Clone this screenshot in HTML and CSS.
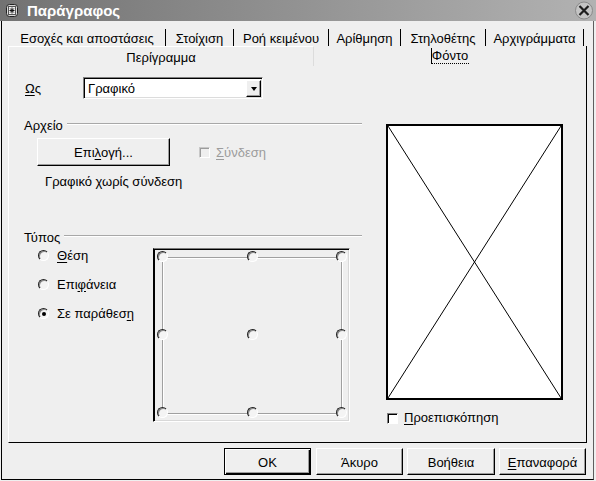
FILE: index.html
```html
<!DOCTYPE html>
<html lang="el">
<head>
<meta charset="utf-8">
<title>Παράγραφος</title>
<link rel="stylesheet" href="styles.css">
</head>
<body>
<div class="window">
  <div class="titlebar">
    <span class="app-icon">
      <svg width="12" height="13" viewBox="0 0 12 13">
        <rect x="0.5" y="0.5" width="11" height="12" rx="3" fill="#d8d8d8" stroke="#222"/>
        <rect x="2.5" y="2.5" width="7" height="8" fill="#f2f2f2" stroke="#555"/>
        <path d="M6 3.5v6M3.5 6.5h5M4.2 4.5l3.6 4M7.8 4.5l-3.6 4" stroke="#111" stroke-width="1"/>
      </svg>
    </span>
    <span class="title">Παράγραφος</span>
    <span class="close">
      <svg width="20" height="19" viewBox="0 0 20 19">
        <circle cx="10" cy="9.5" r="8.5" fill="#c4c4c4" stroke="#8a8a8a"/>
        <path d="M5.5 5l9 9M14.5 5l-9 9" stroke="#1e1e1e" stroke-width="2.2"/>
      </svg>
    </span>
  </div>
  <div class="frame">
    <div class="tabs-row1">
      <div class="tab t1">Εσοχές και αποστάσεις</div>
      <div class="tab t2">Στοίχιση</div>
      <div class="tab t3">Ροή κειμένου</div>
      <div class="tab t4">Αρίθμηση</div>
      <div class="tab t5">Στηλοθέτης</div>
      <div class="tab t6">Αρχιγράμματα</div>
    </div>
    <div class="tabpage">
      <div class="tabs-row2">
        <div class="tab2 inactive">Περίγραμμα</div>
        <div class="tab2 active"><span class="focus">Φόντο</span></div>
      </div>
      <div class="panel">
        <div class="leftcol">
          <div class="as-row">
            <span class="as-label"><u>Ω</u>ς</span>
            <div class="combo">
              <span class="combo-text">Γραφικό</span>
              <span class="combo-btn"><span class="arrow"></span></span>
            </div>
          </div>
          <div class="group-head head-file"><span>Αρχείο</span><span class="rule"></span></div>
          <div class="file-row">
            <div class="btn btn-select">Επι<u>λ</u>ογή...</div>
            <label class="check disabled"><span class="box"></span><span><u>Σ</u>ύνδεση</span></label>
          </div>
          <div class="nolink">Γραφικό χωρίς σύνδεση</div>
          <div class="group-head head-type"><span>Τύπος</span><span class="rule"></span></div>
          <div class="type-row">
            <div class="radios">
              <div class="radio-row"><span class="radio"></span><span><u>Θ</u>έση</span></div>
              <div class="radio-row"><span class="radio"></span><span>Επι<u>φ</u>άνεια</span></div>
              <div class="radio-row"><span class="radio on"></span><span>Σε παράθεσ<u>η</u></span></div>
            </div>
            <div class="posbox">
              <div class="posgrid">
                <span class="radio"></span><span class="radio"></span><span class="radio"></span>
                <span class="radio"></span><span class="radio"></span><span class="radio"></span>
                <span class="radio"></span><span class="radio"></span><span class="radio"></span>
              </div>
            </div>
          </div>
        </div>
        <div class="rightcol">
          <div class="preview">
            <svg width="173" height="272" viewBox="0 0 173 272" preserveAspectRatio="none">
              <line x1="0" y1="0" x2="173" y2="272" stroke="#000" stroke-width="1"/>
              <line x1="173" y1="0" x2="0" y2="272" stroke="#000" stroke-width="1"/>
            </svg>
          </div>
          <label class="check preview-check"><span class="box white"></span><span><u>Π</u>ροεπισκόπηση</span></label>
        </div>
      </div>
    </div>
    <div class="buttons">
      <div class="btn btn-dlg default">OK</div>
      <div class="btn btn-dlg">Άκυρο</div>
      <div class="btn btn-dlg wide">Βοήθεια</div>
      <div class="btn btn-dlg"><u>Ε</u>παναφορά</div>
    </div>
  </div>
</div>
</body>
</html>
```
FILE: styles.css
```css
html, body {
  margin: 0;
  padding: 0;
}
body {
  width: 596px;
  height: 481px;
  overflow: hidden;
  background: #efefef;
  font-family: "Liberation Sans", Arial, sans-serif;
  font-size: 13px;
  color: #000;
}
u {
  text-decoration: underline;
  text-underline-offset: 2px;
}
.window {
  width: 596px;
  height: 481px;
  display: flex;
  flex-direction: column;
}
.titlebar {
  height: 21px;
  flex: none;
  display: flex;
  align-items: center;
  padding: 0 2px 0 6px;
  background: linear-gradient(to right, #727272, #8c8c8c 40%, #b2b2b2);
  color: #fff;
  box-sizing: border-box;
}
.app-icon {
  width: 12px;
  height: 13px;
  display: flex;
}
.title {
  margin-left: 9px;
  font-weight: bold;
  font-size: 15px;
  flex: 1;
}
.close {
  display: flex;
  margin-top: -1px;
}
.frame {
  flex: 1;
  display: flex;
  flex-direction: column;
  margin: 0 2px 1px 1px;
  border-left: 1px solid #000;
  border-right: 1px solid #5e5e5e;
  border-bottom: 1px solid #000;
}
.tabs-row1 {
  height: 25px;
  flex: none;
  display: flex;
  align-items: flex-end;
  padding-left: 7px;
}
.tab {
  height: 17px;
  box-sizing: border-box;
  border-right: 1px solid #000;
  text-align: center;
  line-height: 17px;
  padding-top: 1px;
  white-space: nowrap;
}
.t1 { width: 157px; }
.t2 { width: 68px; }
.t3 { width: 95px; }
.t4 { width: 72px; }
.t5 { width: 85px; }
.t6 { width: 98px; }
.tabpage {
  height: 397px;
  flex: none;
  margin: 0 6px;
  box-sizing: border-box;
  border-left: 1px solid #fff;
  border-right: 1px solid #000;
  border-bottom: 1px solid #000;
  display: flex;
  flex-direction: column;
}
.tabs-row2 {
  height: 20px;
  display: flex;
}
.tab2 {
  box-sizing: border-box;
  text-align: center;
  white-space: nowrap;
}
.tab2.inactive {
  width: 305px;
  border-top: 1px solid #fff;
  border-right: 1px solid #dcdcdc;
  line-height: 19px;
  padding-top: 1px;
}
.tab2.active {
  flex: 1;
  padding-top: 2px;
  line-height: 16px;
}
.focus {
  display: inline-block;
  border-left: 1px solid #000;
  border-bottom: 1px dotted #000;
  line-height: 15px;
  padding: 0 1px 0 0;
}
.panel {
  flex: 1;
  display: flex;
  padding: 11px 0 0 15px;
  gap: 24px;
}
.leftcol {
  width: 338px;
  display: flex;
  flex-direction: column;
}
.as-row {
  height: 22px;
  display: flex;
  align-items: center;
}
.as-label {
  width: 59px;
  padding-left: 1px;
  box-sizing: border-box;
}
.combo {
  width: 180px;
  height: 22px;
  box-sizing: border-box;
  background: #fff;
  border: 1px solid;
  border-color: #808080 #fff #fff #808080;
  box-shadow: inset 1px 1px 0 #000, inset -1px -1px 0 #dcdcdc;
  display: flex;
  align-items: center;
  padding: 1px 1px 1px 4px;
}
.combo-text {
  flex: 1;
}
.combo-btn {
  width: 15px;
  height: 17px;
  box-sizing: border-box;
  background: #efefef;
  border: 1px solid;
  border-color: #fff #000 #000 #fff;
  box-shadow: inset -1px -1px 0 #9a9a9a;
  display: flex;
  align-items: center;
  justify-content: center;
}
.arrow {
  width: 0;
  height: 0;
  border-left: 3.5px solid transparent;
  border-right: 3.5px solid transparent;
  border-top: 4px solid #000;
  margin-top: 1px;
}
.group-head {
  height: 14px;
  line-height: 14px;
  display: flex;
  align-items: flex-start;
  gap: 4px;
}
.group-head .rule {
  flex: 1;
  margin-top: 4px;
  border-top: 1px solid #a8a8a8;
  border-bottom: 1px solid #fff;
}
.head-file { margin-top: 20px; }
.head-type { margin-top: 41px; }
.file-row {
  margin-top: 5px;
  display: flex;
  align-items: center;
  padding-left: 13px;
}
.btn {
  box-sizing: border-box;
  display: flex;
  align-items: center;
  justify-content: center;
  border: 1px solid;
  border-color: #fff #000 #000 #fff;
  box-shadow: inset -1px -1px 0 #9c9c9c;
  background: #efefef;
  white-space: nowrap;
}
.btn-select {
  width: 133px;
  height: 28px;
  padding-top: 1px;
}
.check {
  display: flex;
  align-items: center;
  gap: 5px;
}
.check .box {
  width: 11px;
  height: 11px;
  box-sizing: border-box;
  border: 1px solid;
  border-color: #808080 #fff #fff #808080;
  box-shadow: inset 1px 1px 0 #000;
  background: #efefef;
}
.check .box.white {
  background: #fff;
}
.check.disabled {
  margin-left: 29px;
  color: #9c9c9c;
  gap: 6px;
}
.check.disabled .box {
  box-shadow: inset 1px 1px 0 #9c9c9c;
  border-color: #c8c8c8 #fff #fff #c8c8c8;
}
.nolink {
  margin-top: 8px;
  padding-left: 21px;
  line-height: 16px;
}
.type-row {
  margin-top: 3px;
  display: flex;
}
.radios {
  width: 129px;
  box-sizing: border-box;
  padding-left: 14px;
  display: flex;
  flex-direction: column;
}
.radio-row {
  height: 29px;
  line-height: 16px;
  display: flex;
  align-items: flex-start;
  gap: 8px;
}
.radio-row .radio {
  margin-top: 2px;
}
.radio {
  width: 11px;
  height: 11px;
  box-sizing: border-box;
  border-radius: 50%;
  border: 1px solid;
  border-color: #222 #fff #fff #222;
  box-shadow: inset 1px 1px 0 #8a8a8a;
  background: #f4f4f4;
  position: relative;
}
.radio.on::after {
  content: "";
  position: absolute;
  left: 2.5px;
  top: 2.5px;
  width: 4px;
  height: 4px;
  border-radius: 50%;
  background: #000;
}
.posbox {
  width: 197px;
  height: 174px;
  box-sizing: border-box;
  border: 1px solid;
  border-color: #7a7a7a #fff #fff #000;
  box-shadow: inset 1px 1px 0 #000, inset -1px -1px 0 #d8d8d8;
  padding: 2px 2px 3px 3px;
  display: flex;
}
.posgrid {
  flex: 1;
  position: relative;
  display: grid;
  grid-template-columns: repeat(3, 11px);
  grid-template-rows: repeat(3, 11px);
  justify-content: space-between;
  align-content: space-between;
}
.posgrid::before {
  content: "";
  position: absolute;
  left: 5px;
  top: 6px;
  right: 5px;
  bottom: 4px;
  border: 1px solid #a0a0a0;
  box-shadow: 1px 1px 0 #fff, inset 1px 1px 0 #fff;
}
.rightcol {
  width: 177px;
  margin-top: 47px;
  display: flex;
  flex-direction: column;
}
.preview {
  width: 177px;
  height: 276px;
  box-sizing: border-box;
  border: 2px solid #000;
  background: #fff;
  display: flex;
}
.preview svg {
  display: block;
}
.preview-check {
  margin-top: 10px;
  padding-left: 1px;
  line-height: 16px;
  gap: 6px;
}
.buttons {
  margin-top: 5px;
  height: 27px;
  display: flex;
  padding-left: 222px;
  gap: 4px;
}
.btn-dlg {
  width: 87px;
  height: 27px;
  padding-top: 1px;
}
.btn-dlg.wide {
  width: 88px;
}
.btn-dlg.default {
  margin-right: 1px;
  border: 1px solid #000;
  box-shadow: inset 1px 1px 0 #fff, inset -1px -1px 0 #000, inset -2px -2px 0 #9c9c9c;
}
```
